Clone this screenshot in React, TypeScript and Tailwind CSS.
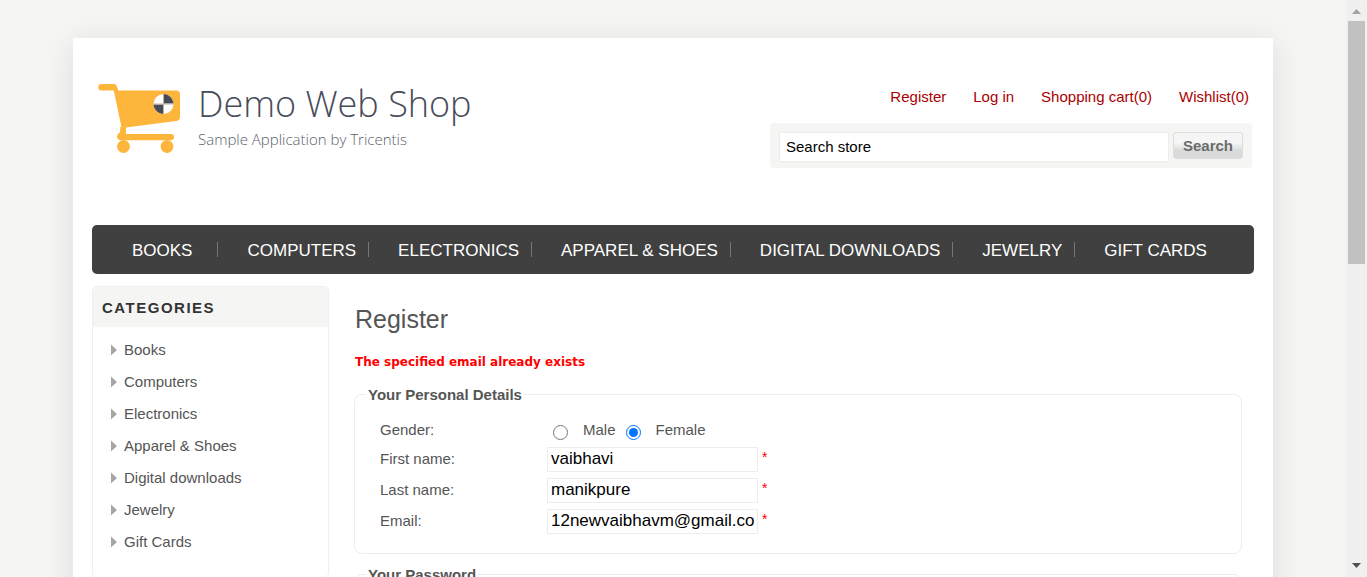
import { useState } from "react";

const headerLinks = ["Register", "Log in", "Shopping cart(0)", "Wishlist(0)"];

const sections = [
  "Books",
  "Computers",
  "Electronics",
  "Apparel & Shoes",
  "Digital downloads",
  "Jewelry",
  "Gift Cards",
];

function CartLogo() {
  return (
    <svg width="84" height="72" viewBox="0 0 84 72" aria-hidden="true">
      <g fill="#feb53b">
        <path d="M3.500 1H16q2.300 0 2.800 2.200L20.200 7.500H78q4 0 4 4V33.500q0 4-3.700 4.500L28 44.500V50H22L23.500 44.200 15.800 7.500H3.500a3.200 3.200 0 0 1 0-6.500z" />
        <path d="M22.500 43.500h5.500v7.500H73a3 3 0 0 1 0 6.200H22.500q-3.500-.7-3.500-3.700 0-2.500 3-4.300z" />
        <circle cx="25.500" cy="63.500" r="6.400" />
        <circle cx="69" cy="63.500" r="6.400" />
      </g>
      <circle cx="65.500" cy="21" r="10" fill="#fff" />
      <path d="M65.900 20.500V11a10 10 0 0 1 9.600 9.500zM65 21.500V31a10 10 0 0 1-9.500-9.500z" fill="#474c59" />
      <path d="M65.500 11v20M55.500 21h20" stroke="#b9ab93" strokeWidth="0.900" />
    </svg>
  );
}

function Logo() {
  return (
    <a href="#home" className="flex gap-4 font-['Open_Sans',sans-serif] font-light text-[#474c59]">
      <CartLogo />
      <span className="flex flex-col">
        <span className="text-[36px] leading-[42px]">Demo Web Shop</span>
        <span className="text-[15px] leading-[28px] text-[#5c606b]">
          Sample Application by Tricentis
        </span>
      </span>
    </a>
  );
}

function Header() {
  return (
    <header className="flex h-[187px] items-start justify-between pt-[45px] pl-[6px] pr-[2px]">
      <Logo />
      <div className="flex w-[482px] flex-col gap-4">
        <ul className="flex justify-end gap-[27px] pt-1 pr-[3px] text-[15px] leading-5 text-[#a00]">
          {headerLinks.map((label) => (
            <li key={label}>
              <a href="#account">{label}</a>
            </li>
          ))}
        </ul>
        <form
          className="flex h-[45px] items-start gap-1 rounded bg-[#f5f5f4] px-[9px] pt-[9px]"
          onSubmit={(e) => e.preventDefault()}
        >
          <input
            type="text"
            aria-label="Search store"
            defaultValue="Search store"
            className="h-[30px] min-w-0 flex-1 border border-[#ededeb] bg-white px-[6px] pb-[2px] text-[15px] text-black outline-none"
          />
          <button
            type="submit"
            className="h-[27px] w-[70px] rounded-[3px] border border-[#ddd] bg-linear-to-b from-[#f5f5f5] from-40% to-[#dadada] to-70% text-[15px] leading-[25px] font-bold text-[#6b6b6b]"
          >
            Search
          </button>
        </form>
      </div>
    </header>
  );
}

function TopMenu() {
  return (
    <nav className="h-[49px] rounded-[5px] bg-[#404040]">
      <ul className="flex h-full items-center pl-[11px] text-[17px] text-white uppercase">
        {sections.map((label) => (
          <li
            key={label}
            className="flex h-[15px] items-center border-r border-[#777] pr-3 pl-[29px] whitespace-nowrap first:pr-[25px] last:border-r-0"
          >
            <a href="#section" className="pt-[2px] leading-5">{label}</a>
          </li>
        ))}
      </ul>
    </nav>
  );
}

function Categories() {
  return (
    <aside className="h-[292px] w-[237px] shrink-0 rounded-[5px] border border-[#efefef]">
      <h2 className="h-10 rounded-t-[5px] bg-[#f5f5f4] pl-[9px] text-[15px] leading-[42px] font-bold tracking-widest text-[#333] uppercase">
        Categories
      </h2>
      <ul className="pt-[7px] pl-[18px] text-[15px] leading-8">
        {sections.map((label) => (
          <li key={label} className="flex items-center gap-[7px]">
            <svg width="6" height="12" viewBox="0 0 6 12" aria-hidden="true">
              <path d="M0 0.500L6 6L0 11.500z" fill="#a5a5a5" />
            </svg>
            <a href="#section">{label}</a>
          </li>
        ))}
      </ul>
    </aside>
  );
}

const fields = [
  { id: "first-name", label: "First name:", type: "text", value: "vaibhavi" },
  { id: "last-name", label: "Last name:", type: "text", value: "manikpure" },
  { id: "email", label: "Email:", type: "email", value: "12newvaibhavm@gmail.com" },
];

function Field({ id, label, type, value }: (typeof fields)[number]) {
  return (
    <div className="flex h-[25px] items-start">
      <label htmlFor={id} className="w-[167px] leading-6">
        {label}
      </label>
      <input
        id={id}
        type={type}
        defaultValue={value}
        className="h-[25px] w-[211px] border border-[#ededeb] bg-white px-[3px] pb-px text-[17px] text-black outline-none"
      />
      <span className="pl-1 text-[14px] leading-5 text-[#f00]">*</span>
    </div>
  );
}

function PersonalDetails() {
  const [gender, setGender] = useState("Female");
  return (
    <fieldset className="h-[170px] rounded-[8px] border border-[#ededed] pl-[13px]">
      <legend className="-ml-[2px] px-[2px] pt-[2px] leading-[18px] font-bold">Your Personal Details</legend>
      <div className="flex flex-col gap-[6px] pt-[11px] pl-3">
        <div className="flex h-[26px] items-center pt-1">
          <span id="gender" className="w-[167px] leading-[22px]">
            Gender:
          </span>
          <div role="radiogroup" aria-labelledby="gender" className="flex gap-[10px] pl-[6px]">
            {["Male", "Female"].map((option) => (
              <label key={option} className="flex items-center gap-[15px]">
                <input
                  type="radio"
                  name="gender"
                  className="mt-1 size-[15px]"
                  checked={gender === option}
                  onChange={() => setGender(option)}
                />
                {option}
              </label>
            ))}
          </div>
        </div>
        {fields.map((field) => (
          <Field key={field.id} {...field} />
        ))}
      </div>
    </fieldset>
  );
}

function ScrollBar() {
  return (
    <div aria-hidden="true" className="flex w-[21px] shrink-0 flex-col items-center bg-[#f0f0f0]">
      <svg width="9" height="21" viewBox="0 0 9 21">
        <path d="M0 14L4.500 9L9 14z" fill="#a3a3a3" />
      </svg>
      <div className="h-[243px] w-[17px] bg-[#c1c1c1]" />
      <svg width="9" height="21" viewBox="0 0 9 21" className="mt-auto">
        <path d="M0 7L4.500 12L9 7z" fill="#505050" />
      </svg>
    </div>
  );
}

export default function App() {
  return (
    <div className="flex h-screen overflow-hidden bg-[#f5f5f3] font-['Liberation_Sans',Arial,sans-serif] text-[15px] text-[#555]">
      <div className="min-w-0 flex-1 overflow-hidden pt-[38px]">
        <div className="mx-auto min-h-full max-w-[1200px] bg-white px-[19px] shadow-[0_5px_30px_rgba(0,0,0,0.1)]">
          <Header />
          <TopMenu />
          <div className="flex gap-[25px] pt-3">
            <Categories />
            <main className="min-w-0 flex-1 pt-4 pr-3">
              <h1 className="pl-px text-[25px] leading-[34px]">Register</h1>
              <p className="mt-4 mb-3 pl-px font-['DejaVu_Sans',Verdana,sans-serif] text-[12px] leading-5 font-bold text-[#f00]">
                The specified email already exists
              </p>
              <PersonalDetails />
              <fieldset className="mt-[10px] h-[160px] rounded-[8px] border border-[#ededed] pl-[13px]">
                <legend className="-ml-[2px] px-[2px] pt-[2px] leading-[18px] font-bold">Your Password</legend>
              </fieldset>
            </main>
          </div>
        </div>
      </div>
      <ScrollBar />
    </div>
  );
}
